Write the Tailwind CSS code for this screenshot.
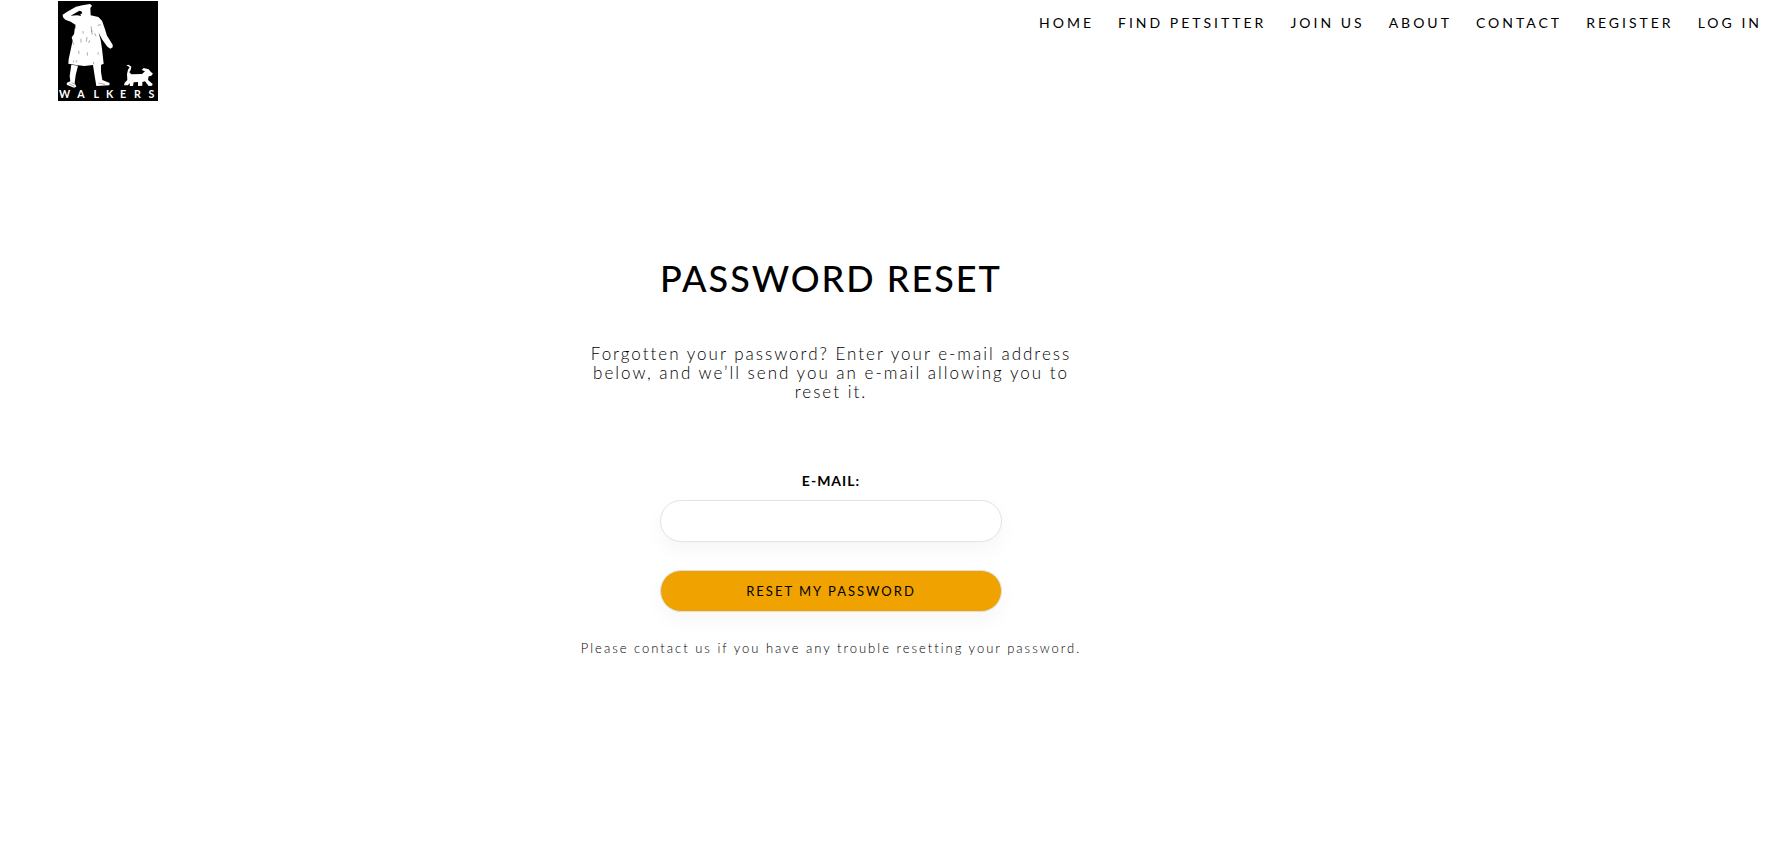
<!DOCTYPE html>
<html lang="en">
<head>
<meta charset="utf-8">
<meta name="viewport" content="width=device-width, initial-scale=1">
<title>Password Reset</title>
<script src="https://cdn.jsdelivr.net/npm/@tailwindcss/browser@4"></script>
</head>
<body class="min-h-screen bg-white font-['Lato','Open_Sans',sans-serif] text-black">
<header class="flex items-start justify-between pt-px pr-[10px] pl-[58px]">
  <a href="#" aria-label="Walkers home" class="block">
    <svg class="block size-[100px]" viewBox="24 3 300 300" role="img">
      <rect x="24" y="3" width="300" height="300" fill="#000"/>
      <g fill="#fff">
        <path d="M38 44 L54 34 L78 20 L97 16 L120 12 L126 17 L121 24 L122 46 L145 51 L156 62 L165 88 L171 107 L188 134 L188 142 L181 146 L172 140 L156 118 L146 98 L152 120 L156 146 L161 191 L151 196 L129 195 L103 198 L78 195 L55 191 L56 178 L64 140 L68 122 L65 112 L72 103 L76 74 L62 65 L46 59 L39 52 Z"/>
        <path d="M64 194 L84 197 L77 226 L74 249 L79 260 L72 263 L50 254 L51 248 L61 244 L59 228 Z"/>
        <path d="M129 195 L153 195 L153 216 L157 240 L179 249 L178 256 L139 258 L134 228 Z"/>
        <path d="M229 196 L236 194 L244 200 L242 210 L238 217 L244 223 L276 222 L285 214 L275 210 L281 204 L296 208 L302 215 L309 221 L303 228 L296 229 L294 240 L308 252 L306 257 L296 258 L285 244 L277 246 L277 257 L264 258 L264 246 L251 247 L249 258 L239 258 L240 250 L233 256 L222 256 L224 248 L232 240 L231 222 L234 209 L239 202 Z"/>
      </g>
      <path d="M62 47 L88 32 L94 34 L97 40 L91 43 L93 48 L82 46 Z" fill="#000"/>
      <g fill="none" stroke="#555" stroke-width="1.5">
        <path d="M76 74l1 12M93 116v12M99 93l1 8M111 111l-2 14M124 91l3 13M134 100l4 9M143 76l10-2M68 126l4 8M87 152l-1 10M112 157v10M145 157l-1 7M80 181v6M130 186l2 7M72 181l-2 6M65 248l10 5M57 251l16 8M145 249l20 4M123 79l3 17M119 121l-3 8"/>
      </g>
      <text fill="#fff" font-family="Lato, sans-serif" font-size="32" font-weight="700" text-anchor="middle" y="295"><tspan x="44">W</tspan><tspan x="93">A</tspan><tspan x="139">L</tspan><tspan x="179">K</tspan><tspan x="219">E</tspan><tspan x="262">R</tspan><tspan x="304">S</tspan></text>
    </svg>
  </a>
  <nav aria-label="Main" class="flex gap-6 pt-3 text-[14px] leading-5 font-normal tracking-[3px] whitespace-nowrap uppercase">
    <a href="#">Home</a>
    <a href="#">Find Petsitter</a>
    <a href="#">Join Us</a>
    <a href="#">About</a>
    <a href="#">Contact</a>
    <a href="#">Register</a>
    <a href="#">Log In</a>
  </nav>
</header>
<main class="flex flex-col items-center pt-[155px] pr-[110px] text-center">
  <h1 class="text-[36px] leading-11 font-medium tracking-[2px] uppercase">Password Reset</h1>
  <p class="mt-11 max-w-[500px] text-[17px] leading-[19px] font-light tracking-[2px]">Forgotten your password? Enter your e-mail address below, and we’ll send you an e-mail allowing you to reset it.</p>
  <form class="mt-[70px] flex w-[342px] max-w-full flex-col" onsubmit="return false">
    <label for="email" class="text-[14px] leading-5 font-bold tracking-[1px] uppercase">E-mail:</label>
    <input id="email" type="email" class="mt-[9px] h-[42px] rounded-full border border-[#e3e3e3] bg-white px-5 shadow-[0_8px_20px_rgba(0,0,0,0.04)] outline-none">
    <button type="submit" class="mt-7 h-[42px] rounded-full border border-[#dedede] bg-[#f0a300] pt-0.5 text-[13px] font-normal tracking-[2px] uppercase shadow-[0_8px_20px_rgba(0,0,0,0.04)]">Reset My Password</button>
  </form>
  <p class="mt-[26px] text-[13px] leading-5 font-light tracking-[2px]">Please contact us if you have any trouble resetting your password.</p>
</main>
</body>
</html>
